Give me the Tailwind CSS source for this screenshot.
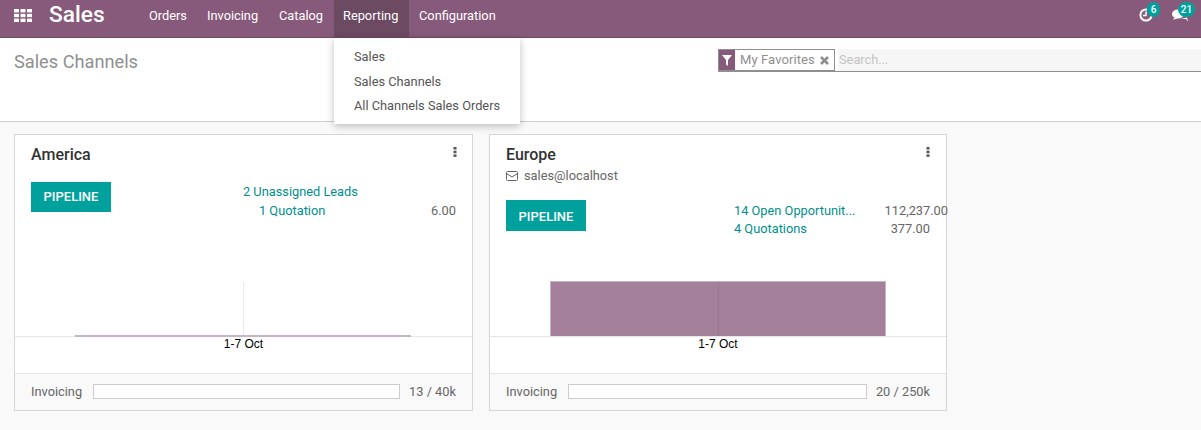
<!DOCTYPE html>
<html>
<head>
<meta charset="utf-8">
<script src="https://cdn.jsdelivr.net/npm/@tailwindcss/browser@4"></script>
</head>
<body class="m-0 h-[430px] w-[1201px] overflow-hidden bg-[#f9f9f9] font-['Roboto',sans-serif] text-[12.8px] text-[#666666]">
<header class="relative flex h-[38px] items-stretch border-b border-[#6b4a62] bg-[#875a7b] text-white">
  <div class="flex w-[149px] items-center pb-[6px]">
    <svg class="ml-[14px] h-[13px] w-[18px]" viewBox="0 0 18 13" fill="#fff"><rect x="0" y="0" width="5" height="3.4"/><rect x="6.5" y="0" width="5" height="3.4"/><rect x="13" y="0" width="5" height="3.4"/><rect x="0" y="4.8" width="5" height="3.4"/><rect x="6.5" y="4.8" width="5" height="3.4"/><rect x="13" y="4.8" width="5" height="3.4"/><rect x="0" y="9.6" width="5" height="3.4"/><rect x="6.5" y="9.6" width="5" height="3.4"/><rect x="13" y="9.6" width="5" height="3.4"/></svg>
    <span class="ml-[17px] text-[22.7px] font-medium leading-none">Sales</span>
  </div>
  <nav class="flex items-stretch pb-[6px]">
    <a class="flex w-[58px] items-center">Orders</a>
    <a class="flex w-[72px] items-center">Invoicing</a>
    <a class="flex w-[55px] items-center">Catalog</a>
    <a class="-mb-[6px] flex w-[75px] items-center bg-[#6b4a62] pb-[6px] pl-[9px]">Reporting</a>
    <a class="ml-[10px] flex items-center">Configuration</a>
  </nav>
  <div class="ml-auto flex items-start">
    <div class="relative mr-[19px] mt-[8px] h-[14px] w-[14px]">
      <svg class="h-[14px] w-[14px]" viewBox="0 0 14 14" fill="none" stroke="#fff" stroke-width="2"><circle cx="7" cy="7" r="5.6"/><path d="M7 3.5V7.5H4" stroke-width="1.5"/></svg>
      <span class="absolute left-[8px] top-[-6px] flex h-[15px] w-[13px] items-center justify-center rounded-full bg-[#00a09d] text-[10px] font-medium leading-none">6</span>
    </div>
    <div class="relative mr-[13px] mt-[8px] h-[14px] w-[16px]">
      <svg class="h-[14px] w-[16px]" viewBox="0 0 16 14" fill="#fff"><ellipse cx="6" cy="6" rx="6" ry="4.6"/><path d="M3 9l-2 3 5-2z"/><path d="M9 11h5l2 2.5-1-4z"/></svg>
      <span class="absolute left-[6px] top-[-6px] flex h-[15px] w-[17px] items-center justify-center rounded-full bg-[#00a09d] text-[10px] font-medium leading-none">21</span>
    </div>
  </div>
</header>

<div class="absolute left-[334px] top-[38px] z-10 flex h-[86px] w-[186px] flex-col bg-white pl-[20px] pt-[7px] text-[#555555] shadow-[0_2px_8px_rgba(0,0,0,0.25)]">
  <a class="h-[24.5px] leading-[24px]">Sales</a>
  <a class="h-[24.5px] leading-[24px]">Sales Channels</a>
  <a class="h-[24.5px] leading-[24px]">All Channels Sales Orders</a>
</div>

<section class="flex h-[84px] border-b border-[#cccccc] bg-white">
  <h1 class="ml-[14px] mt-[13px] text-[18.2px] font-normal leading-[21px] text-[#8f8f8f]">Sales Channels</h1>
  <div class="absolute left-[718px] top-[49px] flex h-[23px] w-[483px] items-stretch border-b border-[#8f8f8f]">
    <div class="flex h-[22px] w-[117px] items-center border border-[#8f8f8f] text-[#8f8f8f]">
      <span class="flex h-full w-[16px] items-center justify-center bg-[#875a7b]">
        <svg class="h-[11px] w-[10px]" viewBox="0 0 10 11" fill="#fff"><path d="M0 0H10L6 5V11L4 9.500V5Z"/></svg>
      </span>
      <span class="ml-[5px] pb-[2px] text-[13px] leading-none tracking-[0.1px]">My Favorites</span>
      <svg class="ml-[5px] h-[9px] w-[9px]" viewBox="0 0 9 9" stroke="#8f8f8f" stroke-width="2.600"><path d="M1 1L8 8M8 1L1 8"/></svg>
    </div>
    <div class="ml-[3px] flex h-[22px] flex-1 items-center bg-[#f6f6f6] pl-[1px] text-[#c4c4c4]">Search...</div>
  </div>
</section>

<main class="flex items-start pl-[14px] pt-[12px]">
  <article class="flex h-[277px] w-[459px] flex-col border border-[#d6d6d6] bg-white">
    <div class="flex h-[146px] flex-col">
      <div class="flex justify-between pl-[16px] pr-[15px] pt-[10px]">
        <h2 class="text-[16px] font-medium leading-[20px] text-[#333333]">America</h2>
        <svg class="mt-[2px] h-[10px] w-[4px]" viewBox="0 0 4 10" fill="#555"><rect x="0.500" y="0" width="3" height="2.500"/><rect x="0.500" y="3.700" width="3" height="2.500"/><rect x="0.500" y="7.400" width="3" height="2.500"/></svg>
      </div>
      <div class="mt-[17px] flex pl-[16px] pr-[16px]">
        <button class="h-[30px] w-[80px] shrink-0 bg-[#00a09d] text-[13px] font-medium text-white">PIPELINE</button>
        <div class="ml-[132px] flex-1 leading-[19px]">
          <div class="text-[#008f8c]">2 Unassigned Leads</div>
          <div class="flex justify-between pl-[16px]"><span class="text-[#008f8c]">1 Quotation</span><span>6.00</span></div>
        </div>
      </div>
    </div>
    <div class="relative h-[55px]">
      <div class="absolute bottom-0 left-[228px] top-[1px] w-px bg-[#ebebeb]"></div>
    </div>
    <div class="relative h-[37px] border-t border-[#e6e6e6]">
      <div class="absolute left-[60px] top-[-2px] h-[2px] w-[336px] bg-[#c9b4c4]"></div>
      <div class="text-center font-['Liberation_Sans',sans-serif] text-[12px] leading-[15px] text-black">1-7 Oct</div>
    </div>
    <div class="flex flex-1 items-center border-t border-[#e6e6e6] bg-[#f9f9f9] pb-[1px] pl-[16px] pr-[16px]">
      <span class="w-[52px]">Invoicing</span>
      <div class="ml-[10px] h-[15px] w-[307px] border border-[#cccccc] bg-white"></div>
      <span class="ml-auto">13 / 40k</span>
    </div>
  </article>

  <article class="ml-[16px] flex h-[277px] w-[458px] flex-col border border-[#d6d6d6] bg-white">
    <div class="flex h-[146px] flex-col">
      <div class="flex justify-between pl-[16px] pr-[16px] pt-[10px]">
        <h2 class="text-[16px] font-medium leading-[20px] text-[#333333]">Europe</h2>
        <svg class="mt-[2px] h-[10px] w-[4px]" viewBox="0 0 4 10" fill="#555"><rect x="0.500" y="0" width="3" height="2.500"/><rect x="0.500" y="3.700" width="3" height="2.500"/><rect x="0.500" y="7.400" width="3" height="2.500"/></svg>
      </div>
      <div class="mt-[2px] flex h-[18px] items-center pl-[16px]">
        <svg class="h-[10px] w-[12px]" viewBox="0 0 12 10" fill="none" stroke="#666" stroke-width="1"><rect x="0.500" y="0.500" width="11" height="9" rx="1"/><path d="M0.500 2.500L6 6L11.500 2.500"/></svg>
        <span class="ml-[6px]">sales@localhost</span>
      </div>
      <div class="mt-[15px] flex pl-[16px]">
        <button class="h-[31px] w-[80px] shrink-0 bg-[#00a09d] pt-[2px] text-[13px] font-medium text-white">PIPELINE</button>
        <div class="ml-[148px] w-[214px] shrink-0 pt-[2px] leading-[18px]">
          <div class="flex justify-between"><span class="text-[#008f8c]">14 Open Opportunit...</span><span class="whitespace-nowrap">112,237.00</span></div>
          <div class="flex justify-between pr-[18px]"><span class="text-[#008f8c]">4 Quotations</span><span>377.00</span></div>
        </div>
      </div>
    </div>
    <div class="flex h-[55px] justify-center pr-[1px]">
      <div class="flex h-[55px] w-[336px] border border-b-0 border-[#c9b4c4] bg-[#a5809a] pl-[167px]"><div class="h-full w-px bg-[#9c7791]"></div></div>
    </div>
    <div class="h-[37px] border-t border-[#e6e6e6]">
      <div class="text-center font-['Liberation_Sans',sans-serif] text-[12px] leading-[15px] text-black">1-7 Oct</div>
    </div>
    <div class="flex flex-1 items-center border-t border-[#e6e6e6] bg-[#f9f9f9] pb-[1px] pl-[16px] pr-[16px]">
      <span class="w-[52px]">Invoicing</span>
      <div class="ml-[10px] h-[15px] w-[299px] border border-[#cccccc] bg-white"></div>
      <span class="ml-auto">20 / 250k</span>
    </div>
  </article>
</main>
</body>
</html>
